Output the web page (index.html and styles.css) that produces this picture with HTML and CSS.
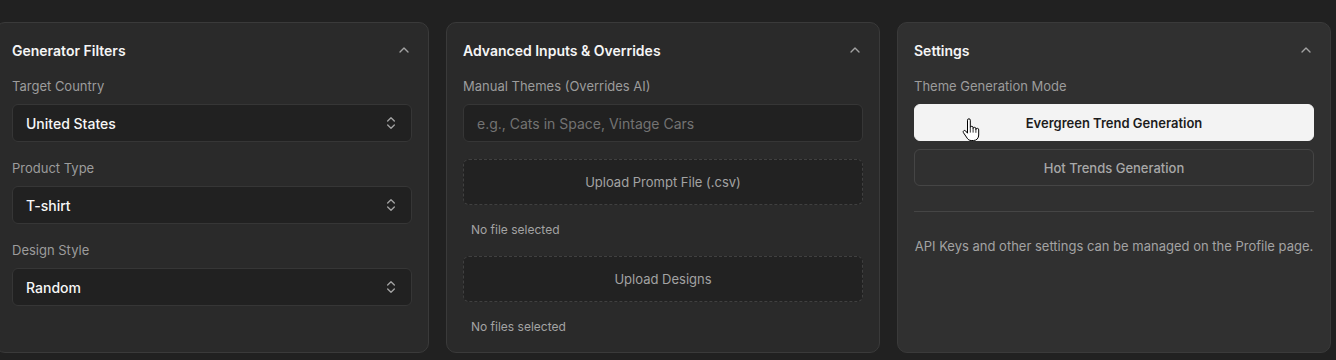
FILE: index.html
```html
<!DOCTYPE html>
<html lang="en">
<head>
<meta charset="utf-8">
<title>Generator</title>
<link rel="stylesheet" href="styles.css">
</head>
<body>
<main class="grid">
  <section class="panel">
    <header class="panel-head">
      <h2>Generator Filters</h2>
      <svg class="chev" viewBox="0 0 24 24" width="16" height="16"><path d="m18 15-6-6-6 6"/></svg>
    </header>
    <div class="fields">
      <div class="field">
        <label class="label">Target Country</label>
        <div class="select"><span>United States</span><svg class="updown" viewBox="0 0 24 24" width="16" height="16"><path d="m7 15 5 5 5-5"/><path d="m7 9 5-5 5 5"/></svg></div>
      </div>
      <div class="field">
        <label class="label">Product Type</label>
        <div class="select"><span>T-shirt</span><svg class="updown" viewBox="0 0 24 24" width="16" height="16"><path d="m7 15 5 5 5-5"/><path d="m7 9 5-5 5 5"/></svg></div>
      </div>
      <div class="field">
        <label class="label">Design Style</label>
        <div class="select"><span>Random</span><svg class="updown" viewBox="0 0 24 24" width="16" height="16"><path d="m7 15 5 5 5-5"/><path d="m7 9 5-5 5 5"/></svg></div>
      </div>
    </div>
  </section>

  <section class="panel">
    <header class="panel-head">
      <h2>Advanced Inputs &amp; Overrides</h2>
      <svg class="chev" viewBox="0 0 24 24" width="16" height="16"><path d="m18 15-6-6-6 6"/></svg>
    </header>
    <div class="fields">
      <div class="field">
        <label class="label">Manual Themes (Overrides AI)</label>
        <input class="input" type="text" placeholder="e.g., Cats in Space, Vintage Cars">
      </div>
      <div class="upload">Upload Prompt File (.csv)</div>
      <p class="note">No file selected</p>
      <div class="upload">Upload Designs</div>
      <p class="note">No files selected</p>
    </div>
  </section>

  <section class="panel panel-hover">
    <header class="panel-head">
      <h2>Settings</h2>
      <svg class="chev" viewBox="0 0 24 24" width="16" height="16"><path d="m18 15-6-6-6 6"/></svg>
    </header>
    <div class="field">
      <label class="label">Theme Generation Mode</label>
      <div class="modes">
        <button class="mode mode-active">Evergreen Trend Generation
          <svg class="cursor" viewBox="0 0 18 24" width="18" height="24"><path d="M5.5 2.2a1.4 1.4 0 0 1 2.8 0V9.6a1.4 1.4 0 0 1 2.8 0.2V10.6a1.4 1.4 0 0 1 2.8 0.3V11.6a1.4 1.4 0 0 1 2.8 0.3V17c0 3.2-2.1 5.5-5.2 5.5H9.2c-1.8 0-3-0.8-4-2.3L1.4 14.6a1.4 1.4 0 0 1 2.2-1.7L5.5 15.2Z"/><path class="cline" d="M8.3 10v4.6M11.1 10.6v4M13.9 11.4v3.4"/></svg>
        </button>
        <button class="mode">Hot Trends Generation</button>
      </div>
    </div>
    <hr class="divider">
    <p class="info">API Keys and other settings can be managed on the Profile page.</p>
  </section>
</main>
</body>
</html>
```

FILE: styles.css
```css
* { box-sizing: border-box; }
html, body {
  margin: 0;
  padding: 0;
  background: #212121;
  font-family: Inter, "Noto Sans", "Liberation Sans", sans-serif;
  color: #f2f2f2;
  overflow: hidden;
}
.grid {
  display: grid;
  grid-template-columns: repeat(3, 434px);
  gap: 17px;
  margin-left: -5px;
  padding-top: 22px;
}
.panel {
  background: #2a2a2a;
  border: 1px solid #3a3a3a;
  border-radius: 10px;
  padding: 15px 16px 16px 16px;
  min-height: 331px;
  display: flex;
  flex-direction: column;
}
.panel-hover { background: #303030; }
.panel-head {
  display: flex;
  align-items: center;
  justify-content: space-between;
  height: 24px;
  margin-bottom: 14px;
}
.panel-head h2 {
  margin: 0;
  font-size: 14px;
  font-weight: 600;
  color: #f5f5f5;
}
.chev, .updown {
  fill: none;
  stroke: #a3a3a3;
  stroke-width: 2;
  stroke-linecap: round;
  stroke-linejoin: round;
}
.fields {
  display: flex;
  flex-direction: column;
  gap: 16px;
}
.field {
  display: flex;
  flex-direction: column;
  gap: 8px;
}
.label {
  font-size: 13px;
  line-height: 20px;
  color: #9c9c9c;
}
.select {
  height: 38px;
  border: 1px solid #363636;
  border-radius: 6px;
  background: #212121;
  display: flex;
  align-items: center;
  justify-content: space-between;
  padding: 0 12px 0 13px;
  font-size: 14px;
  font-weight: 500;
  color: #f7f7f7;
}
.input {
  height: 38px;
  border: 1px solid #363636;
  border-radius: 6px;
  background: #212121;
  padding: 0 13px;
  font-family: inherit;
  font-size: 14px;
  color: #f2f2f2;
  outline: none;
}
.input::placeholder { color: #737373; }
.upload {
  height: 46px;
  margin-top: 1px;
  border: 1px dashed #404040;
  border-radius: 6px;
  background: #222222;
  display: flex;
  align-items: center;
  justify-content: center;
  font-size: 13px;
  color: #a3a3a3;
}
.note {
  margin: 0;
  padding: 0 8px;
  font-size: 12px;
  line-height: 18px;
  color: #a3a3a3;
}
.modes {
  display: flex;
  flex-direction: column;
  gap: 8px;
}
.mode {
  position: relative;
  height: 37px;
  border: 1px solid #454545;
  border-radius: 6px;
  background: transparent;
  font-family: inherit;
  font-size: 13px;
  font-weight: 500;
  color: #a8a8a8;
}
.mode-active {
  background: #f3f3f3;
  border-color: #f3f3f3;
  color: #1c1c1c;
  font-weight: 600;
}
.cursor {
  position: absolute;
  left: 47px;
  top: 13px;
  fill: #ffffff;
  stroke: #000000;
  stroke-width: 1;
  stroke-linejoin: round;
}
.cursor .cline { fill: none; stroke-width: 0.8; }
.divider {
  border: 0;
  border-top: 1px solid #454545;
  margin: 25px 0 0;
}
.info {
  margin: 24px 0 0;
  text-align: center;
  font-size: 13px;
  line-height: 20px;
  color: #a3a3a3;
}
```
